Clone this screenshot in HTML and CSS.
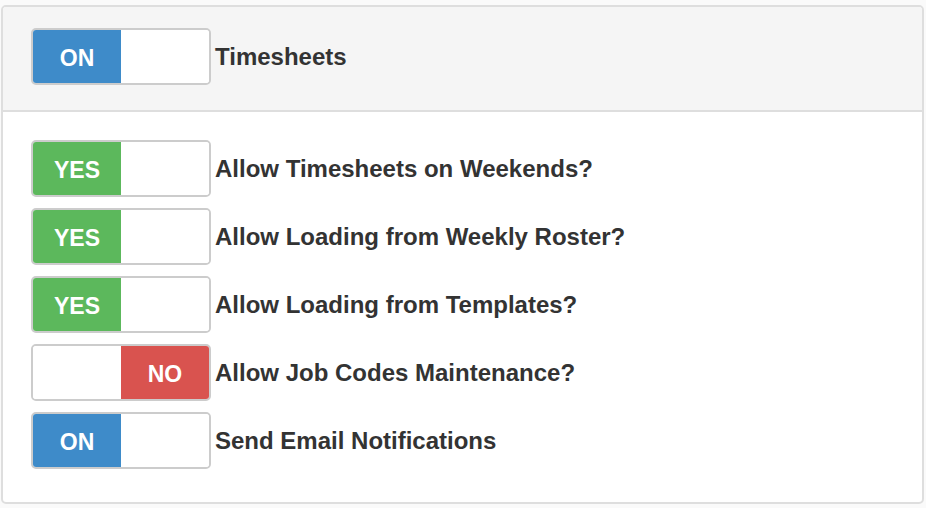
FILE: index.html
```html
<!DOCTYPE html>
<html>
<head>
<meta charset="utf-8">
<link rel="stylesheet" href="styles.css">
</head>
<body>
<div class="panel">
  <div class="panel-heading">
    <div class="row">
      <div class="switch"><span class="half on-blue">ON</span><span class="half blank"></span></div>
      <span class="label">Timesheets</span>
    </div>
  </div>
  <div class="panel-body">
    <div class="row">
      <div class="switch"><span class="half on-green">YES</span><span class="half blank"></span></div>
      <span class="label">Allow Timesheets on Weekends?</span>
    </div>
    <div class="row">
      <div class="switch"><span class="half on-green">YES</span><span class="half blank"></span></div>
      <span class="label">Allow Loading from Weekly Roster?</span>
    </div>
    <div class="row">
      <div class="switch"><span class="half on-green">YES</span><span class="half blank"></span></div>
      <span class="label">Allow Loading from Templates?</span>
    </div>
    <div class="row">
      <div class="switch"><span class="half blank"></span><span class="half off-red">NO</span></div>
      <span class="label">Allow Job Codes Maintenance?</span>
    </div>
    <div class="row">
      <div class="switch"><span class="half on-blue">ON</span><span class="half blank"></span></div>
      <span class="label">Send Email Notifications</span>
    </div>
  </div>
</div>
</body>
</html>
```
FILE: styles.css
```css
html, body {
  margin: 0;
  background: #fafafa;
  font-family: "Liberation Sans", Arial, sans-serif;
}
body {
  padding: 5px 2px 6px 1px;
}
.panel {
  border: 2px solid #dedede;
  border-radius: 5px;
  background: #ffffff;
  overflow: hidden;
}
.panel-heading {
  background: #f5f5f5;
  border-bottom: 2px solid #dedede;
  padding: 21px 28px 25px;
}
.panel-body {
  padding: 28px 28px 33px;
  display: flex;
  flex-direction: column;
  gap: 11px;
}
.row {
  display: flex;
  align-items: center;
  gap: 4px;
}
.switch {
  display: flex;
  width: 176px;
  height: 53px;
  border: 2px solid #cccccc;
  border-radius: 5px;
  overflow: hidden;
  background: #fff;
  flex: none;
}
.half {
  width: 88px;
  height: 100%;
  box-sizing: border-box;
  padding-top: 3px;
  display: flex;
  align-items: center;
  justify-content: center;
  color: #fff;
  font-weight: bold;
  font-size: 23px;
}
.on-blue { background: #3e8bc9; }
.on-green { background: #5cb85c; }
.off-red { background: #d9534f; }
.blank { background: #fff; }
.label {
  font-weight: bold;
  font-size: 24px;
  color: #333333;
}
```
